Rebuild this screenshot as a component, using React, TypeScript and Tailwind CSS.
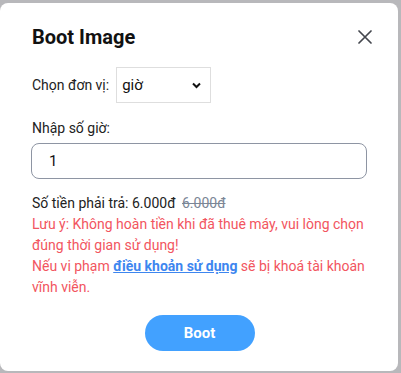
import React from "react";

export default function App() {
  return (
    <div className="w-[401px] h-[373px] bg-[#b8b8bb] pt-[3px] pr-[3px] overflow-hidden" style={{ fontFamily: "Roboto, 'Noto Sans', sans-serif" }}>
      <div className="bg-white rounded-lg h-[368px] px-8 pt-5 flex flex-col">
        <div className="flex items-center justify-between h-7">
          <h2 className="text-[20px] font-bold text-[#111] leading-7">Boot Image</h2>
          <button className="mr-[-11px] w-6 h-6 flex items-center justify-center text-[#44474e]">
            <svg width="14" height="14" viewBox="0 0 14 14" fill="none" stroke="currentColor" strokeWidth="1.7" strokeLinecap="round">
              <path d="M1 1L13 13M13 1L1 13" />
            </svg>
          </button>
        </div>
        <div className="flex items-center mt-4 gap-[7px]">
          <span className="text-[14px] text-[#222]">Chọn đơn vị:</span>
          <div className="relative w-[95px] h-[36px] border border-[#dedede] flex items-center pl-[5px] text-[15px] text-[#111]">
            giờ
            <svg className="absolute right-[9px] top-[14px]" width="9" height="7" viewBox="0 0 9 7" fill="none" stroke="#111" strokeWidth="2">
              <path d="M1 1.5L4.5 5L8 1.5" />
            </svg>
          </div>
        </div>
        <div className="mt-[15px] text-[14px] leading-[21px] text-[#222]">Nhập số giờ:</div>
        <div className="mt-1 w-[336px] -ml-px h-[36px] border border-[#8e95a3] rounded-lg flex items-center pl-[17px] text-[15px] text-[#111]">1</div>
        <div className="mt-[14px] text-[14px] leading-[21px]">
          <p className="text-[#222]">
            Số tiền phải trả: 6.000đ <span className="ml-[3px] line-through text-[#7b8696]">6.000đ</span>
          </p>
          <p className="text-[#f25560]">
            Lưu ý: Không hoàn tiền khi đã thuê máy, vui lòng chọn đúng thời gian sử dụng!
          </p>
          <p className="text-[#f25560]">
            Nếu vi phạm <a className="font-bold text-[#3d86ef] underline">điều khoản sử dụng</a> sẽ bị khoá tài khoản vĩnh viễn.
          </p>
        </div>
        <div className="flex justify-center mt-[17px]">
          <button className="w-[110px] h-[36px] rounded-full bg-[#42a1ff] text-white font-bold text-[15px] ml-[1px]">Boot</button>
        </div>
      </div>
    </div>
  );
}
